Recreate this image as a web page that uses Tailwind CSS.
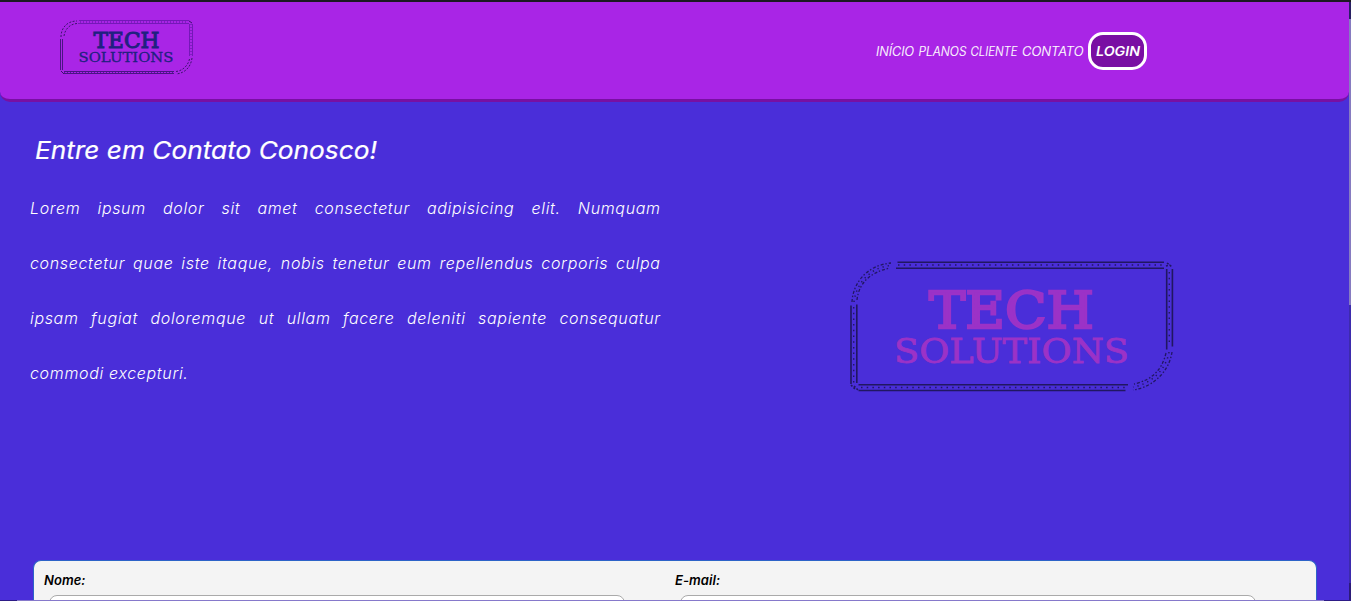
<!DOCTYPE html>
<html lang="pt-BR">
<head>
<meta charset="utf-8">
<title>Tech Solutions</title>
<script src="https://cdn.jsdelivr.net/npm/@tailwindcss/browser@4"></script>
</head>
<body class="relative h-[601px] w-[1351px] overflow-hidden bg-[#4a2ed9] font-['Inter',sans-serif] italic text-white [font-feature-settings:'cv11']">
<div class="h-0.5 bg-[#1c1922]"></div>
<header class="flex h-[100px] w-[1349px] items-start rounded-b-[10px] border-b-3 border-[#790fa3] bg-[#a925e6]">
  <svg class="ml-[59px] mt-[17px] not-italic" width="135" height="58" viewBox="59 19 135 58" fill="none">
    <g stroke="#5a159f" stroke-width="1">
      <path d="M79 20.5H189M78 23.5H189M189.500 24V56M192.500 24V56" stroke="#7418b8"/>
      <path d="M60.500 39V70M62.500 39V70M64 71.500H174M64 73.500H174" stroke="#4a1484"/>
      <path d="M80 22H188M191 24V56M64 72.500H174" stroke-dasharray="1 2"/>
      <path d="M61 37C61 28 67 21 77 21M64 36C65 29 70 24 77 23.500M192 58C191 66 186 73 176 74M189.500 59C188 66 182 71 176 71.500" stroke-dasharray="2 1.500" stroke="#3b126c"/>
      <path d="M189 21L192 23M61 71L64 74" stroke="#3b126c"/>
    </g>
    <g fill="#202080" stroke="#202080" font-family="DejaVu Serif, serif">
      <text x="93.500" y="47.700" font-size="21.500" stroke-width="1" textLength="66" lengthAdjust="spacingAndGlyphs">TECH</text>
      <text x="78.500" y="62" font-size="13.700" stroke-width=".3" textLength="95" lengthAdjust="spacingAndGlyphs">SOLUTIONS</text>
    </g>
  </svg>
  <nav class="ml-[682px] mt-[30px] flex h-[38px] items-center text-[12.400px] font-light">
    <svg width="208" height="24" viewBox="876 38 208 24" fill="#fff" stroke="#fff" stroke-width=".15">
      <text x="876" y="54.500" textLength="38" lengthAdjust="spacingAndGlyphs">INÍCIO</text>
      <text x="918.500" y="54.500" textLength="48" lengthAdjust="spacingAndGlyphs">PLANOS</text>
      <text x="970.500" y="54.500" textLength="47" lengthAdjust="spacingAndGlyphs">CLIENTE</text>
      <text x="1022" y="54.500" textLength="61.500" lengthAdjust="spacingAndGlyphs">CONTATO</text>
    </svg>
    <a class="ml-1 flex h-[38px] w-[59px] items-center justify-center rounded-[15px] border-3 border-white bg-[#790fa3]">
      <svg width="48" height="20" fill="#fff"><text class="text-[13.500px] font-semibold" x="2" y="15" textLength="44" lengthAdjust="spacingAndGlyphs">LOGIN</text></svg>
    </a>
  </nav>
</header>
<main>
  <section class="flex h-[458px]">
    <div class="w-[660px] pl-[30px]">
      <h1 class="mt-[28px] ml-[5px] h-10 text-[24.500px]/[40px] font-normal">
        <svg width="350" height="40" fill="#fff" stroke="#fff" stroke-width=".2"><text x="0" y="28.500" textLength="342" lengthAdjust="spacingAndGlyphs">Entre em Contato Conosco!</text></svg>
      </h1>
      <div class="mt-[11.400px] text-[16px]/[54.700px] font-light tracking-[0.660px]">
        <p class="-mr-[0.660px] whitespace-nowrap [text-align-last:justify]">Lorem ipsum dolor sit amet consectetur adipisicing elit. Numquam</p>
        <p class="-mr-[0.660px] whitespace-nowrap [text-align-last:justify]">consectetur quae iste itaque, nobis tenetur eum repellendus corporis culpa</p>
        <p class="-mr-[0.660px] whitespace-nowrap [text-align-last:justify]">ipsam fugiat doloremque ut ullam facere deleniti sapiente consequatur</p>
        <p>commodi excepturi.</p>
      </div>
    </div>
    <svg class="ml-[188px] mt-[156px] not-italic" width="328" height="136" viewBox="848 258 328 136" fill="none">
      <g stroke="#211762" stroke-width="1.600">
        <path d="M897.500 262.200H1164M896 268.200H1164M851 305.500V384M856.800 304.500V383M858.500 384.700H1128M858.500 390.500H1125.500M1166.700 269V349.500M1172.400 269V346.500"/>
        <path d="M898 265H1164M853.700 307V383M861 387.500H1125M1169.300 272V346" stroke-dasharray="1.500 4.200" stroke-width="1.400"/>
        <path d="M852 302C853 282 868 265 891 263M857 300C859 282 871 272 890 268M1172 352C1169 372 1153 387 1133 390M1166 353C1162 370 1152 380 1134 384" stroke-dasharray="3 1.800 1.500 2" stroke-width="1.300"/>
        <path d="M854 302C856 284 870 267 891 265.500M1169 352C1166 370 1151 384 1133 387" stroke-dasharray="1.300 4" stroke-width="1.500"/>
        <path d="M1167 263L1172 267M1166 266L1170 265M851 385L855 389M854 386L858 390" stroke-dasharray="2 1.500"/>
      </g>
      <g fill="#9b32c7" stroke="#9b32c7" font-family="DejaVu Serif, serif">
        <text x="929" y="327.500" font-size="50.500" stroke-width="2.400" textLength="165" lengthAdjust="spacingAndGlyphs">TECH</text>
        <text x="894" y="362.500" font-size="33.500" stroke-width=".8" textLength="235" lengthAdjust="spacingAndGlyphs">SOLUTIONS</text>
      </g>
    </svg>
  </section>
  <form class="ml-[33px] flex h-[60px] w-[1284px] rounded-t-lg border border-b-0 border-[#2d63c8] bg-[#f4f4f4] pl-[10px] pt-[9px] text-[13px]/[20px] font-semibold tracking-[0.050px] text-black">
    <div class="w-[631px]"><label>Nome:</label><div class="ml-[5px] mt-[5px] h-8 w-[576px] rounded-lg border border-[#aaa] bg-white"></div></div>
    <div class="w-[631px]"><label>E-mail:</label><div class="ml-[5px] mt-[5px] h-8 w-[576px] rounded-lg border border-[#aaa] bg-white"></div></div>
  </form>
</main>
<div class="absolute right-0 top-[2px] h-[599px] w-[2px] bg-[#3d2bad]"><div class="h-[17px] bg-[#282063]"></div><div class="h-[286px] bg-[#867bc0]"></div><div class="mt-[278px] h-[18px] bg-[#2c1b78]"></div></div>
<div class="absolute bottom-0 left-0 flex h-px w-full bg-[#2d1b86]"><div class="ml-[17px] w-[1307px] bg-[#8679cb]"></div></div>
</body>
</html>
